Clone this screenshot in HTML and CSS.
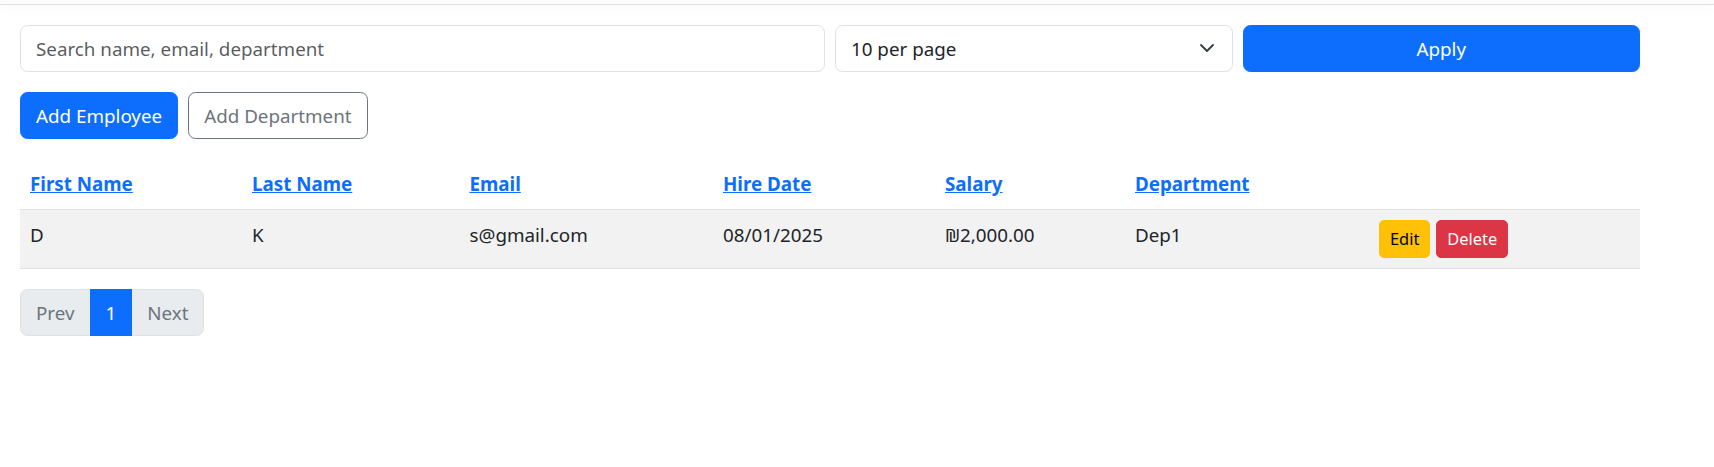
FILE: index.html
```html
<!DOCTYPE html>
<html lang="en">
<head>
<meta charset="utf-8">
<title>Employees</title>
<link rel="stylesheet" href="styles.css">
</head>
<body>
<div class="topbar"></div>
<main class="page">
  <form class="filters">
    <input class="field" type="text" placeholder="Search name, email, department">
    <div class="select-wrap">
      <select class="field select">
        <option>10 per page</option>
        <option>25 per page</option>
        <option>50 per page</option>
      </select>
      <svg class="chevron" viewBox="0 0 16 16" width="16" height="16" aria-hidden="true"><path fill="none" stroke="#343a40" stroke-linecap="round" stroke-linejoin="round" stroke-width="1.8" d="m2 5 6 6 6-6"/></svg>
    </div>
    <button class="btn btn-primary" type="button">Apply</button>
  </form>

  <div class="toolbar">
    <button class="btn btn-primary" type="button">Add Employee</button>
    <button class="btn btn-outline" type="button">Add Department</button>
  </div>

  <table class="table">
    <thead>
      <tr>
        <th class="c1"><a href="#">First Name</a></th>
        <th class="c2"><a href="#">Last Name</a></th>
        <th class="c3"><a href="#">Email</a></th>
        <th class="c4"><a href="#">Hire Date</a></th>
        <th class="c5"><a href="#">Salary</a></th>
        <th class="c6"><a href="#">Department</a></th>
        <th class="c7"></th>
      </tr>
    </thead>
    <tbody>
      <tr>
        <td>D</td>
        <td>K</td>
        <td>s@gmail.com</td>
        <td>08/01/2025</td>
        <td>₪2,000.00</td>
        <td>Dep1</td>
        <td>
          <div class="row-actions">
            <button class="btn-sm btn-warning" type="button">Edit</button>
            <button class="btn-sm btn-danger" type="button">Delete</button>
          </div>
        </td>
      </tr>
    </tbody>
  </table>

  <nav class="pagination">
    <span class="page-link disabled">Prev</span>
    <span class="page-link active">1</span>
    <span class="page-link disabled">Next</span>
  </nav>
</main>
</body>
</html>
```

FILE: styles.css
```css
* { box-sizing: border-box; }

body {
  margin: 0;
  font-family: "Noto Sans", "Open Sans", sans-serif;
  font-size: 18.8px;
  line-height: 30px;
  color: #212529;
  background: #fff;
}

.topbar {
  height: 5px;
  background: #fcfcfc;
  border-bottom: 1px solid #dee2e6;
  box-shadow: 0 3px 14px rgba(0, 0, 0, 0.05);
}

.page {
  width: 1620px;
  margin: 20px 0 0 20px;
}

.filters {
  display: grid;
  grid-template-columns: 805fr 397.5fr 397.5fr;
  gap: 10px;
  margin: 0 0 20px;
}

.field {
  display: block;
  width: 100%;
  height: 47px;
  padding: 7.5px 15px;
  font: inherit;
  line-height: 30px;
  color: #212529;
  background: #fff;
  border: 1px solid #dee2e6;
  border-radius: 7.5px;
  outline: none;
}

.field::placeholder {
  color: rgba(33, 37, 41, 0.75);
}

.select-wrap {
  position: relative;
}

.select {
  appearance: none;
  -webkit-appearance: none;
  padding-right: 50px;
}

.chevron {
  position: absolute;
  right: 18px;
  top: 14.5px;
  pointer-events: none;
}

.btn {
  display: inline-block;
  height: 47px;
  padding: 7.5px 15px;
  font: inherit;
  line-height: 30px;
  border: 1px solid transparent;
  border-radius: 7.5px;
  cursor: pointer;
}

.btn-primary {
  color: #fff;
  background: #0d6efd;
  border-color: #0d6efd;
}

.btn-outline {
  color: #6c757d;
  background: #fff;
  border-color: #6c757d;
}

.toolbar {
  display: flex;
  gap: 10px;
  margin-bottom: 20px;
}

.table {
  width: 1620px;
  table-layout: fixed;
  border-collapse: collapse;
  margin-bottom: 20px;
}

.table th,
.table td {
  padding: 10px;
  text-align: left;
  border-bottom: 1px solid #dee2e6;
  vertical-align: top;
}

.table th {
  font-weight: 700;
}

.table th a {
  color: #0d6efd;
  text-decoration: underline;
}

.table tbody tr {
  background: #f2f2f2;
}

.c1 { width: 222px; }
.c2 { width: 217.5px; }
.c3 { width: 253.5px; }
.c4 { width: 222px; }
.c5 { width: 190px; }
.c6 { width: 244px; }
.c7 { width: 271px; }

.row-actions {
  display: flex;
  gap: 6px;
}

.btn-sm {
  height: 38px;
  padding: 5px 10px;
  font: inherit;
  font-size: 16.4px;
  line-height: 26px;
  border: 1px solid transparent;
  border-radius: 5px;
  cursor: pointer;
}

.btn-warning {
  color: #000;
  background: #ffc107;
  border-color: #ffc107;
}

.btn-danger {
  color: #fff;
  background: #dc3545;
  border-color: #dc3545;
}

.pagination {
  display: flex;
}

.page-link {
  display: block;
  padding: 7.5px 15px;
  line-height: 30px;
  color: #6c757d;
  background: #e9ecef;
  border: 1px solid #dee2e6;
  margin-left: -1px;
}

.page-link:first-child {
  margin-left: 0;
  border-radius: 7.5px 0 0 7.5px;
}

.page-link:last-child {
  border-radius: 0 7.5px 7.5px 0;
}

.page-link.active {
  color: #fff;
  background: #0d6efd;
  border-color: #0d6efd;
  position: relative;
}
```
